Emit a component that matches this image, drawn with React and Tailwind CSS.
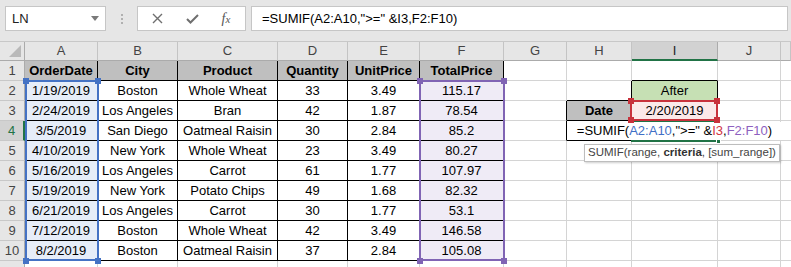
import React from 'react';

const data = [
  ['1/19/2019', 'Boston', 'Whole Wheat', '33', '3.49', '115.17'],
  ['2/24/2019', 'Los Angeles', 'Bran', '42', '1.87', '78.54'],
  ['3/5/2019', 'San Diego', 'Oatmeal Raisin', '30', '2.84', '85.2'],
  ['4/10/2019', 'New York', 'Whole Wheat', '23', '3.49', '80.27'],
  ['5/16/2019', 'Los Angeles', 'Carrot', '61', '1.77', '107.97'],
  ['5/19/2019', 'New York', 'Potato Chips', '49', '1.68', '82.32'],
  ['6/21/2019', 'Los Angeles', 'Carrot', '30', '1.77', '53.1'],
  ['7/12/2019', 'Boston', 'Whole Wheat', '42', '3.49', '146.58'],
  ['8/2/2019', 'Boston', 'Oatmeal Raisin', '37', '2.84', '105.08'],
];
const headers = ['OrderDate', 'City', 'Product', 'Quantity', 'UnitPrice', 'TotalPrice'];
const colLetters = ['A', 'B', 'C', 'D', 'E', 'F', 'G', 'H', 'I', 'J', ''];

const GRID = 'border-r border-b border-[#d4d4d4]';
const BLACK = 'border-r border-b border-black';
const RBLACK = 'border-r border-b border-r-black border-b-[#d4d4d4]';
const BBLACK = 'border-r border-b border-r-[#d4d4d4] border-b-black';

function Cell({ cls, children }) {
  return (
    <div className={`h-[20px] flex items-center justify-center whitespace-nowrap overflow-hidden text-[13px] text-black ${cls}`}>
      {children}
    </div>
  );
}

function Toolbar() {
  return (
    <div className="h-[42px] bg-[#e6e6e6] border-b border-[#c8c8c8] flex items-start pt-[6px]">
      <div className="ml-[5px] w-[101px] h-[25px] bg-white border border-[#c6c6c6] flex items-center justify-between pl-[6px] pr-[6px]">
        <span className="text-[13px] text-[#222]">LN</span>
        <svg width="8" height="5" viewBox="0 0 8 5"><path d="M0 0 L8 0 L4 5 Z" fill="#7a7a7a" /></svg>
      </div>
      <div className="w-[31px] h-[25px] flex flex-col items-center justify-center gap-[2px]">
        <div className="w-[2px] h-[2px] bg-[#b0b0b0]" />
        <div className="w-[2px] h-[2px] bg-[#b0b0b0]" />
        <div className="w-[2px] h-[2px] bg-[#b0b0b0]" />
      </div>
      <div className="w-[109px] h-[25px] bg-white border border-[#c6c6c6] flex items-center">
        <div className="w-[39px] flex justify-center">
          <svg width="11" height="11" viewBox="0 0 11 11"><path d="M1 1 L10 10 M10 1 L1 10" stroke="#6f6f6f" strokeWidth="1.4" /></svg>
        </div>
        <div className="w-[30px] flex justify-center">
          <svg width="13" height="10" viewBox="0 0 13 10"><path d="M1 5 L4.5 8.5 L12 1" stroke="#6f6f6f" strokeWidth="2" fill="none" /></svg>
        </div>
        <div className="w-[38px] flex justify-center">
          <span className="italic text-[14px] text-[#555] font-['Liberation_Serif',serif] leading-none">f<span className="text-[11px]">x</span></span>
        </div>
      </div>
      <div className="ml-[5px] w-[537px] h-[25px] bg-white border border-[#c6c6c6] flex items-center pl-[10px]">
        <span className="text-[13px] text-black whitespace-nowrap">=SUMIF(A2:A10,"&gt;=" &amp;I3,F2:F10)</span>
      </div>
    </div>
  );
}

function rowCells(r) {
  const cells = [];
  for (let c = 0; c < 6; c++) {
    if (r === 1) {
      cells.push(<Cell key={c} cls={`${BLACK} bg-[#bfbfbf] font-bold`}>{headers[c]}</Cell>);
    } else if (r >= 2 && r <= 10) {
      const bg = c === 0 ? 'bg-[#e6edf8]' : c === 5 ? 'bg-[#efebf6]' : 'bg-white';
      cells.push(<Cell key={c} cls={`${BLACK} ${bg}`}>{data[r - 2][c]}</Cell>);
    } else {
      cells.push(<Cell key={c} cls={GRID} />);
    }
  }
  cells.push(<Cell key="g" cls={r === 3 || r === 4 ? RBLACK : GRID} />);
  if (r === 2) cells.push(<Cell key="h" cls={BLACK} />);
  else if (r === 3) cells.push(<Cell key="h" cls={`${BLACK} bg-[#bfbfbf] font-bold`}>Date</Cell>);
  else if (r === 4) cells.push(<Cell key="h" cls={BLACK} />);
  else cells.push(<Cell key="h" cls={GRID} />);
  if (r === 1) cells.push(<Cell key="i" cls={BBLACK} />);
  else if (r === 2) cells.push(<Cell key="i" cls={`${BLACK} bg-[#c6e0b4]`}>After</Cell>);
  else if (r === 3) cells.push(<Cell key="i" cls={`${BLACK} bg-[#fbe9e9]`}>2/20/2019</Cell>);
  else if (r === 4) cells.push(<Cell key="i" cls={BLACK} />);
  else cells.push(<Cell key="i" cls={GRID} />);
  cells.push(<Cell key="j" cls={GRID} />);
  cells.push(<Cell key="k" cls="border-b border-[#d4d4d4]" />);
  return cells;
}

function Corner({ cls }) {
  return <div className={`absolute w-[6px] h-[6px] ${cls}`} />;
}

export default function App() {
  const rows = [1, 2, 3, 4, 5, 6, 7, 8, 9, 10, 11];
  return (
    <div className="w-[791px] h-[267px] overflow-hidden bg-white font-['Liberation_Sans',Arial,sans-serif]">
      <Toolbar />
      <div className="relative">
        <div className="grid grid-cols-[25px_73px_80px_100px_70px_72px_84px_63px_65px_86px_63px_1fr]">
          <div className="h-[19px] bg-[#e6e6e6] border-r border-b border-[#ababab] relative">
            <svg className="absolute right-[3px] bottom-[3px]" width="12" height="12" viewBox="0 0 12 12"><path d="M12 0 L12 12 L0 12 Z" fill="#b9b9b9" /></svg>
          </div>
          {colLetters.map((l, i) =>
            l === 'I' ? (
              <div key={i} className="h-[19px] bg-[#d2d2d2] border-r border-r-[#ababab] border-b-2 border-b-[#217346] flex items-center justify-center text-[13px] text-[#222]">I</div>
            ) : (
              <div key={i} className="h-[19px] bg-[#e6e6e6] border-r border-b border-r-[#c4c4c4] border-b-[#ababab] flex items-center justify-center text-[13px] text-[#444]">{l}</div>
            )
          )}
          {rows.map((r) => (
            <React.Fragment key={r}>
              {r === 4 ? (
                <div className="h-[20px] bg-[#d2d2d2] border-r-2 border-r-[#217346] border-b border-b-[#c8c8c8] flex items-center justify-center text-[13px] text-[#217346]">4</div>
              ) : (
                <div className="h-[20px] bg-[#e6e6e6] border-r border-b border-r-[#ababab] border-b-[#c8c8c8] flex items-center justify-center text-[13px] text-[#444]">{r === 11 ? '' : r}</div>
              )}
              {rowCells(r)}
            </React.Fragment>
          ))}
        </div>

        <div className="absolute left-[25px] top-[38px] w-[74px] h-[181px] border-2 border-[#4472c4]" />
        <Corner cls="left-[23px] top-[36px] bg-[#4472c4]" />
        <Corner cls="left-[95px] top-[36px] bg-[#4472c4]" />
        <Corner cls="left-[23px] top-[216px] bg-[#4472c4]" />
        <Corner cls="left-[95px] top-[216px] bg-[#4472c4]" />

        <div className="absolute left-[419px] top-[38px] w-[86px] h-[181px] border-2 border-[#8064b4]" />
        <Corner cls="left-[417px] top-[36px] bg-[#8064b4]" />
        <Corner cls="left-[501px] top-[36px] bg-[#8064b4]" />
        <Corner cls="left-[417px] top-[216px] bg-[#8064b4]" />
        <Corner cls="left-[501px] top-[216px] bg-[#8064b4]" />

        <div className="absolute left-[631px] top-[78px] w-[88px] h-[22px] border-2 border-[#217346]" />

        <div className="absolute left-[568px] top-[80px] w-[213px] h-[18px] bg-white flex items-center justify-center text-[13px] text-black whitespace-nowrap">
          <span>=SUMIF(</span>
          <span className="text-[#3f6fc6]">A2:A10</span>
          <span>,"&gt;=" &amp;</span>
          <span className="text-[#d1343f]">I3</span>
          <span>,</span>
          <span className="text-[#8e5fc0]">F2:F10</span>
          <span>)</span>
        </div>
        <div className="absolute left-[716px] top-[97px] w-[5px] h-[5px] bg-[#217346] border border-white" />

        <div className="absolute left-[630px] top-[58px] w-[88px] h-[21px] border-2 border-[#c8323c]" />
        <Corner cls="left-[628px] top-[56px] bg-[#c8323c]" />
        <Corner cls="left-[714px] top-[56px] bg-[#c8323c]" />
        <Corner cls="left-[628px] top-[75px] bg-[#c8323c]" />
        <Corner cls="left-[714px] top-[75px] bg-[#c8323c]" />

        <div className="absolute left-[584px] top-[102px] w-[196px] h-[18px] bg-white border border-[#bdbdbd] shadow-[1px_1px_2px_rgba(0,0,0,0.2)] flex items-center pl-[3px] text-[11.5px] text-[#444] whitespace-nowrap">
          <span>SUMIF(range,&nbsp;</span>
          <span className="font-bold text-[#333]">criteria</span>
          <span>, [sum_range])</span>
        </div>
      </div>
    </div>
  );
}
